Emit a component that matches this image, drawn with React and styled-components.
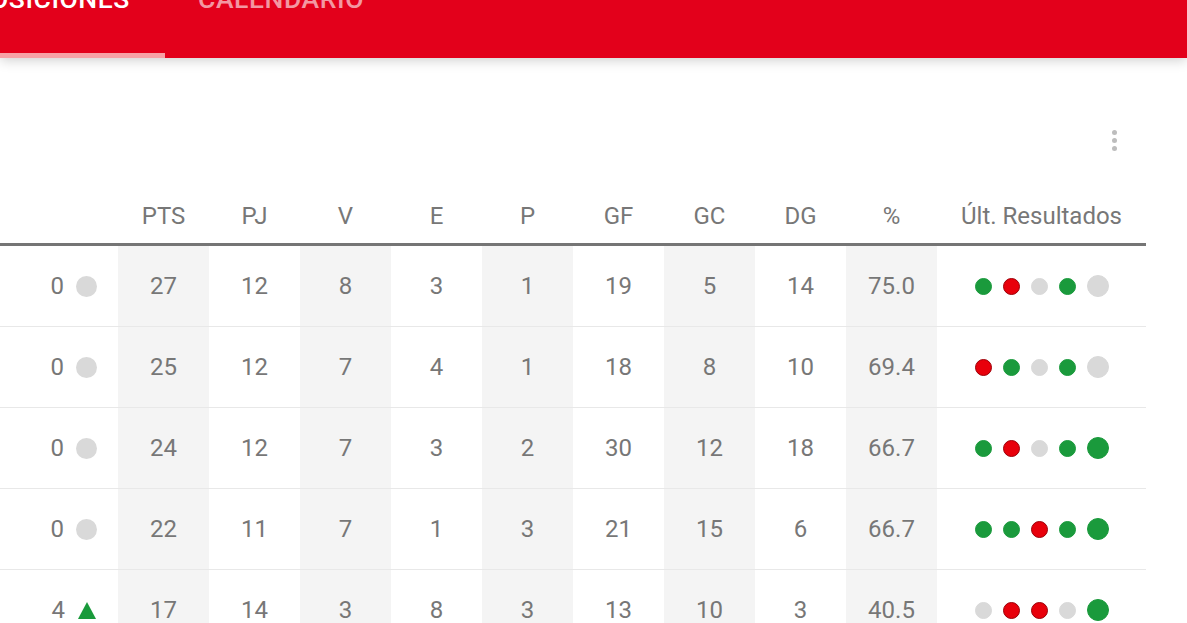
import React from "react";
import { createGlobalStyle, styled } from "styled-components";

const Global = createGlobalStyle`
  html, body {
    margin: 0;
    padding: 0;
    background: #ffffff;
    font-family: Roboto, "Noto Sans", sans-serif;
    overflow: hidden;
  }
`;

const AppBar = styled.header`
  height: 58px;
  background: #e3001b;
  display: flex;
  box-shadow: 0 2px 12px rgba(0, 0, 0, 0.2);
  position: relative;
  z-index: 1;
  overflow: hidden;
`;

const Tab = styled.div`
  position: relative;
  flex: 0 0 auto;
  width: ${(p) => (p.$width ? `${p.$width}px` : "auto")};
  padding: 0 ${(p) => p.$padRight}px 0 ${(p) => p.$padLeft}px;
  display: flex;
  justify-content: ${(p) => (p.$width ? "flex-end" : "flex-start")};
  overflow: hidden;
  box-sizing: border-box;

  &::after {
    content: "";
    display: ${(p) => (p.$active ? "block" : "none")};
    position: absolute;
    left: 0;
    right: 0;
    bottom: 0;
    height: 5px;
    background: #f7a1a6;
  }
`;

const TabLabel = styled.span`
  margin-top: -16px;
  font-size: 26.5px;
  line-height: 30px;
  font-weight: 500;
  letter-spacing: 0.6px;
  white-space: nowrap;
  color: ${(p) => (p.$active ? "#ffffff" : "rgba(255, 255, 255, 0.6)")};
`;

const Content = styled.main`
  width: 1146px;
`;

const Toolbar = styled.div`
  height: 132px;
  display: flex;
  justify-content: flex-end;
  align-items: flex-start;
  padding: 70px 20px 0 0;
  box-sizing: border-box;
`;

const Kebab = styled.div`
  width: 24px;
  height: 24px;
  display: flex;
  flex-direction: column;
  align-items: center;
  justify-content: center;
  gap: 3px;

  span {
    width: 5px;
    height: 5px;
    border-radius: 50%;
    background: #bdbdbd;
  }
`;

const Table = styled.table`
  width: 1146px;
  border-collapse: collapse;
  table-layout: fixed;
  color: #777777;
  font-size: 24px;
`;

const Th = styled.th`
  height: 52px;
  padding: 0 0 1px;
  font-weight: 400;
  text-align: center;
  color: #777777;
  font-size: 24px;
  border-bottom: 3px solid #757575;
`;

const Td = styled.td`
  height: 80px;
  padding: 0;
  text-align: center;
  background: ${(p) => (p.$shade ? "#f4f4f4" : "transparent")};
  border-bottom: 1px solid #e8e8e8;
`;

const ChangeCell = styled.div`
  display: flex;
  justify-content: flex-end;
  align-items: center;
  gap: 12px;
  padding-right: 21px;
`;

const Marker = styled.span`
  width: 21px;
  height: 21px;
  border-radius: 50%;
  background: #d9d9d9;
`;

const UpArrow = styled.span`
  width: 0;
  height: 0;
  margin: 0 1px;
  border-left: 9.5px solid transparent;
  border-right: 9.5px solid transparent;
  border-bottom: 17px solid #199a3b;
`;

const Results = styled.div`
  display: flex;
  justify-content: center;
  align-items: center;
  gap: 11px;
`;

const colors = {
  G: { bg: "#1a9a3c", border: "#1a9a3c" },
  R: { bg: "#e8000b", border: "#9c0008" },
  N: { bg: "#d9d9d9", border: "#d9d9d9" },
};

const Dot = styled.span`
  box-sizing: border-box;
  width: ${(p) => (p.$big ? 22 : 17)}px;
  height: ${(p) => (p.$big ? 22 : 17)}px;
  border-radius: 50%;
  background: ${(p) => colors[p.$r].bg};
  border: 1.5px solid ${(p) => colors[p.$r].border};
`;

const columns = ["PTS", "PJ", "V", "E", "P", "GF", "GC", "DG", "%"];

const rows = [
  { change: 0, up: false, stats: [27, 12, 8, 3, 1, 19, 5, 14, "75.0"], res: "GRNGN" },
  { change: 0, up: false, stats: [25, 12, 7, 4, 1, 18, 8, 10, "69.4"], res: "RGNGN" },
  { change: 0, up: false, stats: [24, 12, 7, 3, 2, 30, 12, 18, "66.7"], res: "GRNGG" },
  { change: 0, up: false, stats: [22, 11, 7, 1, 3, 21, 15, 6, "66.7"], res: "GGRGG" },
  { change: 4, up: true, stats: [17, 14, 3, 8, 3, 13, 10, 3, "40.5"], res: "NRRNG" },
];

const App = () => {
  return (
    <>
      <Global />
      <AppBar>
        <Tab $active $width={165} $padLeft={0} $padRight={35}>
          <TabLabel $active>POSICIONES</TabLabel>
        </Tab>
        <Tab $padLeft={33} $padRight={32}>
          <TabLabel>CALENDARIO</TabLabel>
        </Tab>
      </AppBar>
      <Content>
        <Toolbar>
          <Kebab>
            <span />
            <span />
            <span />
          </Kebab>
        </Toolbar>
        <Table>
          <colgroup>
            <col style={{ width: 118 }} />
            {columns.map((c) => (
              <col key={c} style={{ width: 91 }} />
            ))}
            <col style={{ width: 209 }} />
          </colgroup>
          <thead>
            <tr>
              <Th />
              {columns.map((c) => (
                <Th key={c}>{c}</Th>
              ))}
              <Th>Últ. Resultados</Th>
            </tr>
          </thead>
          <tbody>
            {rows.map((r, i) => (
              <tr key={i}>
                <Td>
                  <ChangeCell>
                    {r.change}
                    {r.up ? <UpArrow /> : <Marker />}
                  </ChangeCell>
                </Td>
                {r.stats.map((s, j) => (
                  <Td key={j} $shade={j % 2 === 0}>
                    {s}
                  </Td>
                ))}
                <Td>
                  <Results>
                    {r.res.split("").map((x, k) => (
                      <Dot key={k} $r={x} $big={k === 4} />
                    ))}
                  </Results>
                </Td>
              </tr>
            ))}
          </tbody>
        </Table>
      </Content>
    </>
  );
};

export default App;
